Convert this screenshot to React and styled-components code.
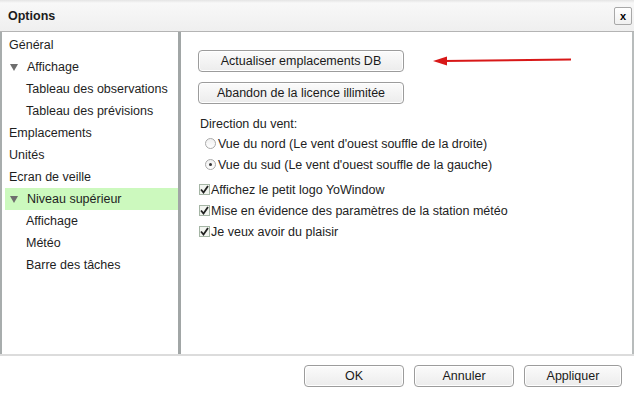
import React from 'react';
import styled, { createGlobalStyle } from 'styled-components';

const GlobalStyle = createGlobalStyle`
  html, body {
    margin: 0;
    padding: 0;
    background: #fff;
  }
  body {
    font-family: "Liberation Sans", Arial, sans-serif;
    font-size: 12.5px;
    color: #222;
  }
`;

const Window = styled.div`
  width: 634px;
  height: 397px;
  display: flex;
  flex-direction: column;
  background: #fff;
  overflow: hidden;
`;

const TitleBar = styled.div`
  height: 32px;
  box-sizing: border-box;
  display: flex;
  align-items: center;
  justify-content: space-between;
  padding: 1px 2px 0 8px;
  background: linear-gradient(#e4e4e4 0px, #f8f8f8 3px, #efefef 100%);
  border-bottom: 1px solid #b4b4b4;
`;

const Title = styled.span`
  font-weight: bold;
  font-size: 12.5px;
  color: #1c1c1c;
`;

const CloseButton = styled.button`
  width: 18px;
  height: 18px;
  padding: 0;
  border: 1px solid #a8a8a8;
  border-radius: 2px;
  background: linear-gradient(#ffffff, #f0f0f0);
  font-family: "Liberation Sans", Arial, sans-serif;
  font-size: 11px;
  font-weight: bold;
  line-height: 14px;
  color: #000;
`;

const Body = styled.div`
  height: 322px;
  display: flex;
  border-bottom: 2px solid #dcdcdc;
`;

const Sidebar = styled.ul`
  list-style: none;
  margin: 0;
  padding: 2px 0 0 2px;
  width: 174px;
  border-left: 2px solid #a8adad;
  border-right: 3px solid #a1a6a6;
`;

const TreeItem = styled.li`
  height: 22px;
  line-height: 22px;
  margin-left: 1px;
  padding-left: ${p => (p.$indent ? 21 : 4)}px;
  display: flex;
  align-items: center;
  background: ${p => (p.$selected ? '#ccf9be' : 'transparent')};
  color: #1e1e1e;
  white-space: nowrap;
`;

const Toggle = styled.span`
  width: 0;
  height: 0;
  margin: 0 9px 0 1px;
  border-left: 4px solid transparent;
  border-right: 4px solid transparent;
  border-top: 7px solid #6e6e6e;
`;

const Content = styled.div`
  flex: 1;
  padding: 18px 0 0 17px;
  border-right: 2px solid #b8bcbc;
  display: flex;
  flex-direction: column;
  align-items: flex-start;
`;

const ButtonRow = styled.div`
  display: flex;
  align-items: center;
`;

const PushButton = styled.button`
  width: ${p => p.$width || 206}px;
  height: 22px;
  padding: 0;
  border: 1px solid #9c9c9c;
  border-radius: 4px;
  background: linear-gradient(#fbfbfb, #ececec);
  font-family: "Liberation Sans", Arial, sans-serif;
  font-size: 12.5px;
  color: #1a1a1a;
  box-shadow: inset 0 0 0 1px #fff;
`;

const Arrow = styled.svg`
  margin-left: 29px;
  display: block;
`;

const Stack = styled.div`
  display: flex;
  flex-direction: column;
  gap: 10px;
  margin-bottom: 10px;
`;

const GroupLabel = styled.div`
  height: 19px;
  line-height: 21px;
  padding-left: 2px;
`;

const OptionRow = styled.label`
  height: 21px;
  display: flex;
  align-items: center;
  padding-left: ${p => (p.$indent ? 7 : 1)}px;
  white-space: nowrap;
`;

const Radio = styled.span`
  width: 11px;
  height: 11px;
  box-sizing: border-box;
  border-radius: 50%;
  border: 1px solid #a9a9a9;
  background: linear-gradient(#f0f0f0, #ffffff);
  margin-right: 2px;
  display: flex;
  align-items: center;
  justify-content: center;
  &::after {
    content: '';
    width: 3px;
    height: 3px;
    border-radius: 50%;
    background: ${p => (p.$checked ? '#333' : 'transparent')};
  }
`;

const Check = styled.span`
  width: 11px;
  height: 11px;
  box-sizing: border-box;
  border: 1px solid #a5b5a5;
  background: #f2f5f0;
  margin-right: 1px;
  display: flex;
  align-items: center;
  justify-content: center;
`;

const RadioGroup = styled.div`
  display: flex;
  flex-direction: column;
  margin-bottom: 4px;
`;

const Footer = styled.div`
  flex: 1;
  display: flex;
  justify-content: flex-end;
  align-items: flex-start;
  gap: 10px;
  padding: 9px 12px 0 0;
`;

const tree = [
  { label: 'Général' },
  { label: 'Affichage', toggle: true },
  { label: 'Tableau des observations', indent: true },
  { label: 'Tableau des prévisions', indent: true },
  { label: 'Emplacements' },
  { label: 'Unités' },
  { label: 'Ecran de veille' },
  { label: 'Niveau supérieur', toggle: true, selected: true },
  { label: 'Affichage', indent: true },
  { label: 'Météo', indent: true },
  { label: 'Barre des tâches', indent: true },
];

const checks = [
  'Affichez le petit logo YoWindow',
  'Mise en évidence des paramètres de la station météo',
  'Je veux avoir du plaisir',
];

const Tick = () => (
  <svg width="9" height="9" viewBox="0 0 9 9">
    <path d="M1 4.5 L3.5 7.5 L8 1" fill="none" stroke="#222" strokeWidth="1.8" />
  </svg>
);

export default function App() {
  return (
    <Window>
      <GlobalStyle />
      <TitleBar>
        <Title>Options</Title>
        <CloseButton>x</CloseButton>
      </TitleBar>
      <Body>
        <Sidebar>
          {tree.map((item, i) => (
            <TreeItem key={i} $indent={item.indent} $selected={item.selected}>
              {item.toggle && <Toggle />}
              {item.label}
            </TreeItem>
          ))}
        </Sidebar>
        <Content>
          <Stack>
            <ButtonRow>
              <PushButton>Actualiser emplacements DB</PushButton>
              <Arrow width="140" height="12" viewBox="0 0 140 12">
                <line x1="10" y1="6" x2="138" y2="4.5" stroke="#d81818" strokeWidth="2" />
                <path d="M0 6 L14 1.5 L14 10.5 Z" fill="#d81818" />
              </Arrow>
            </ButtonRow>
            <PushButton>Abandon de la licence illimitée</PushButton>
          </Stack>
          <GroupLabel>Direction du vent:</GroupLabel>
          <RadioGroup>
            <OptionRow $indent>
              <Radio />
              Vue du nord (Le vent d'ouest souffle de la droite)
            </OptionRow>
            <OptionRow $indent>
              <Radio $checked />
              Vue du sud (Le vent d'ouest souffle de la gauche)
            </OptionRow>
          </RadioGroup>
          {checks.map(text => (
            <OptionRow key={text}>
              <Check>
                <Tick />
              </Check>
              {text}
            </OptionRow>
          ))}
        </Content>
      </Body>
      <Footer>
        <PushButton $width={100}>OK</PushButton>
        <PushButton $width={100}>Annuler</PushButton>
        <PushButton $width={98}>Appliquer</PushButton>
      </Footer>
    </Window>
  );
}
